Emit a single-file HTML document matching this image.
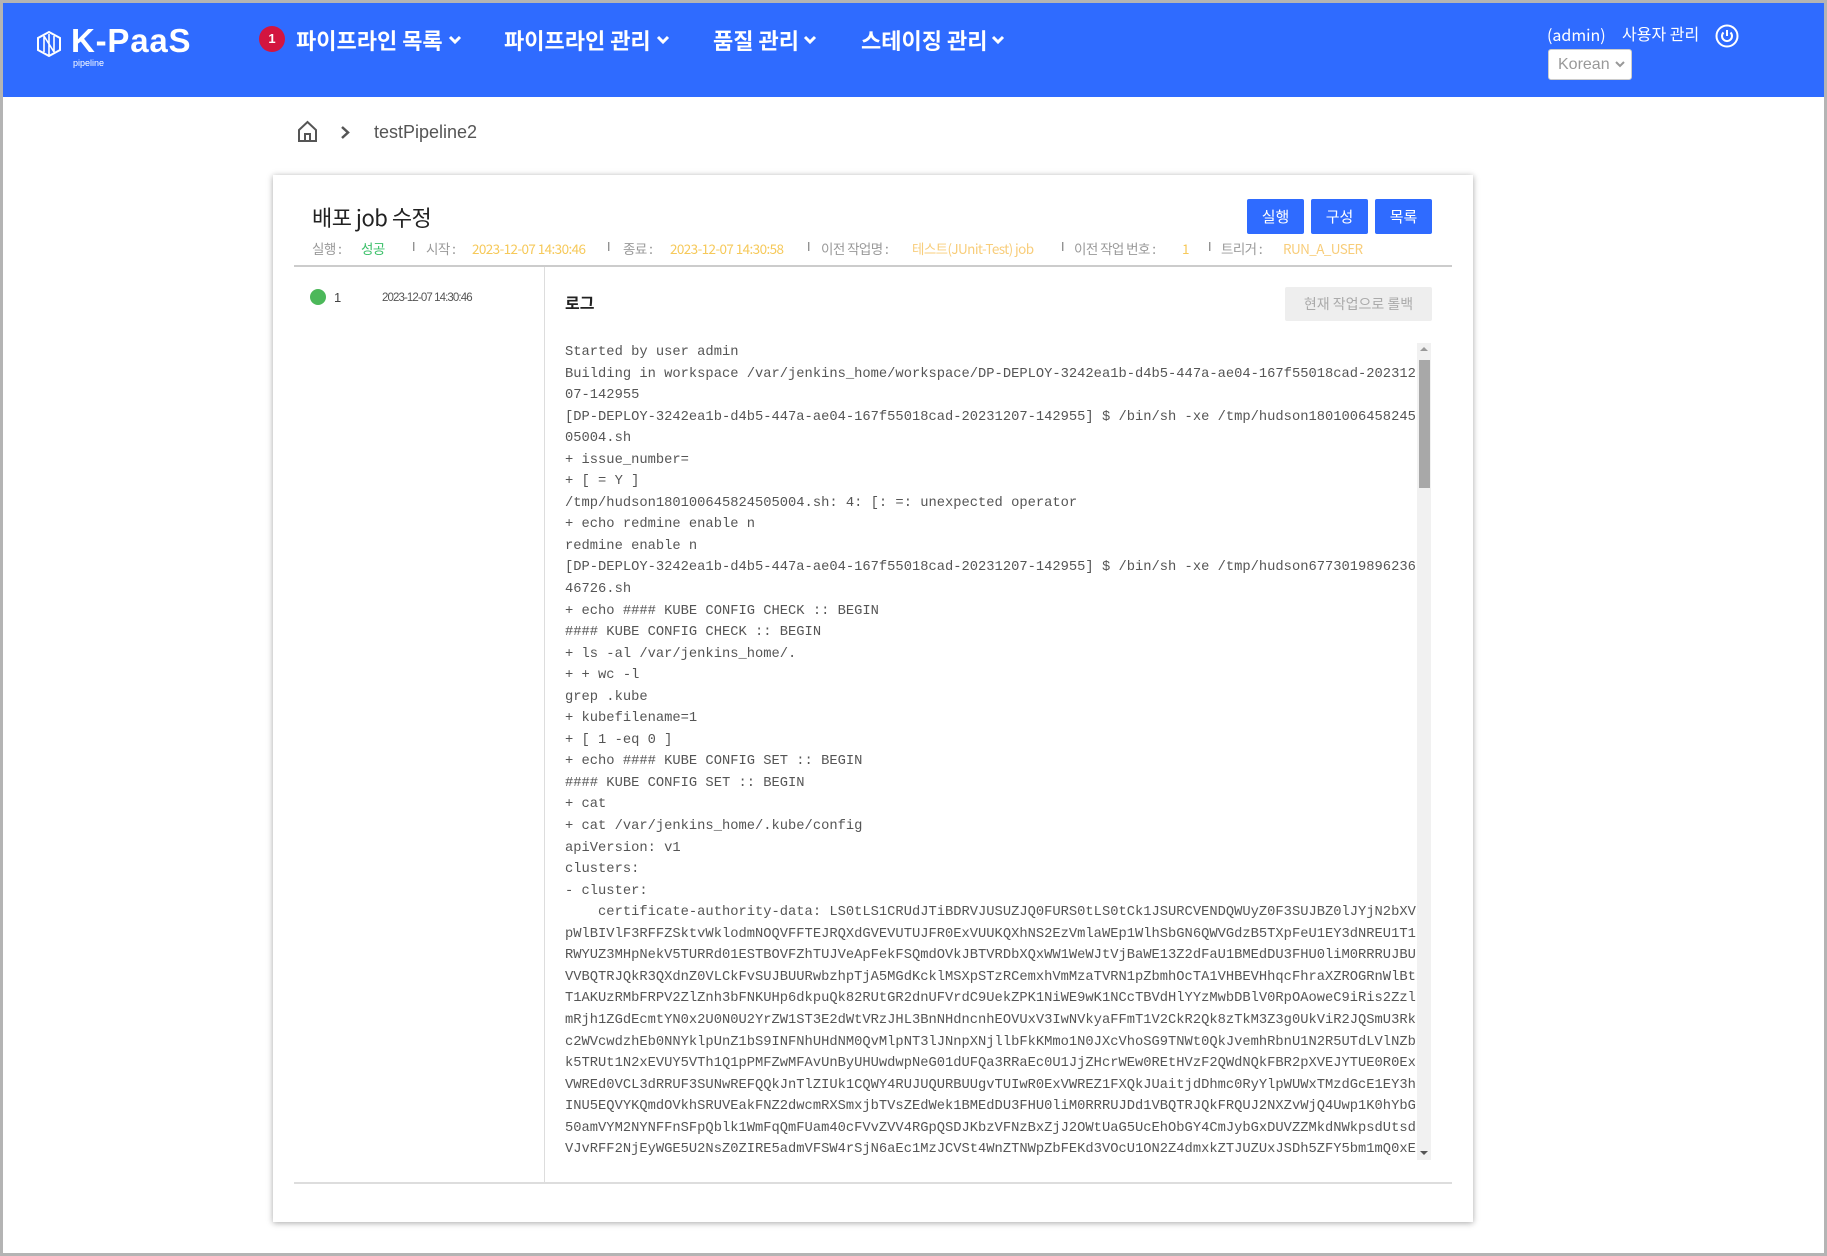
<!DOCTYPE html>
<html><head><meta charset="utf-8">
<style>
*{margin:0;padding:0;box-sizing:border-box}
html,body{width:1827px;height:1256px;overflow:hidden;background:#fff;font-family:"Liberation Sans","Noto Sans CJK KR",sans-serif}
.frame{position:absolute;left:0;top:0;width:1827px;height:1256px;border:3px solid #b4b4b4;border-bottom-width:3px}
.hdr{position:absolute;left:3px;top:3px;width:1821px;height:94px;background:#2f6bff}
.a{position:absolute;white-space:nowrap}
.menu{color:#fff;font-size:22px;font-weight:bold;top:24px;font-family:"Noto Sans CJK KR",sans-serif}
.meta{top:238px;font-size:13.5px;letter-spacing:-0.6px;font-family:"Noto Sans CJK KR","Liberation Sans",sans-serif}
.lab{color:#999}.val{color:#f6c95a}.sep{color:#777;font-size:12px}
.btn{position:absolute;top:199px;width:57px;height:35px;background:#2f6bff;color:#fff;font-size:15px;text-align:center;line-height:35px;border-radius:2px;font-family:"Noto Sans CJK KR",sans-serif}
pre{position:absolute;left:565px;top:342px;width:862px;height:818px;overflow:hidden;font-family:"Liberation Mono",monospace;font-size:13.77px;line-height:21.55px;color:#555}
</style></head><body>
<div class="frame"></div>
<div class="hdr"></div>
<svg class="a" style="left:36px;top:30px" width="26" height="28" viewBox="0 0 26 28"><path d="M13 2 L24 8 L24 20 L13 26 L2 20 L2 8 Z" fill="none" stroke="#fff" stroke-width="2"/><path d="M8 6 V22 M13 4 V26 M18 6 V22 M8 6 L18 22" stroke="#fff" stroke-width="1.6" fill="none"/></svg>
<div class="a" style="left:71px;top:22px;color:#fff;font-size:33px;font-weight:bold;letter-spacing:0.8px">K-PaaS</div>
<div class="a" style="left:73px;top:58px;color:#fff;font-size:9px">pipeline</div>
<div class="a" style="left:259px;top:26px;width:26px;height:26px;border-radius:50%;background:#d3153f;color:#fff;font-size:13px;font-weight:bold;text-align:center;line-height:26px">1</div>
<div class="a menu" style="left:296px">파이프라인 목록</div>
<div class="a menu" style="left:504px">파이프라인 관리</div>
<div class="a menu" style="left:713px">품질 관리</div>
<div class="a menu" style="left:861px">스테이징 관리</div>
<svg class="a" style="left:448px;top:34px" width="14" height="12"><path d="M2 3 L7 8 L12 3" stroke="#fff" stroke-width="3" fill="none"/></svg>
<svg class="a" style="left:656px;top:34px" width="14" height="12"><path d="M2 3 L7 8 L12 3" stroke="#fff" stroke-width="3" fill="none"/></svg>
<svg class="a" style="left:803px;top:34px" width="14" height="12"><path d="M2 3 L7 8 L12 3" stroke="#fff" stroke-width="3" fill="none"/></svg>
<svg class="a" style="left:991px;top:34px" width="14" height="12"><path d="M2 3 L7 8 L12 3" stroke="#fff" stroke-width="3" fill="none"/></svg>
<div class="a" style="left:1547px;top:22px;color:#fff;font-size:16px;font-family:'Noto Sans CJK KR',sans-serif">(admin)</div>
<div class="a" style="left:1622px;top:21px;color:#fff;font-size:16px;font-family:'Noto Sans CJK KR',sans-serif">사용자 관리</div>
<svg class="a" style="left:1714px;top:23px" width="26" height="26" viewBox="0 0 26 26"><circle cx="13" cy="13" r="10.5" fill="none" stroke="#fff" stroke-width="2"/><path d="M9.5 9.5 A5 5 0 1 0 16.5 9.5 M13 7 V13" fill="none" stroke="#fff" stroke-width="2"/></svg>
<div class="a" style="left:1548px;top:49px;width:84px;height:31px;background:#fff;border:1px solid #ccc;border-radius:3px;color:#999;font-size:16px;line-height:29px;padding-left:9px">Korean</div>
<svg class="a" style="left:1615px;top:60px" width="10" height="8"><path d="M1 2 L5 6 L9 2" stroke="#999" stroke-width="2" fill="none"/></svg>

<svg class="a" style="left:297px;top:120px" width="21" height="23" viewBox="0 0 21 23"><path d="M2 10 L10.5 2 L19 10 V21 H2 Z M8 21 V14 H13 V21" fill="none" stroke="#555" stroke-width="2"/></svg>
<svg class="a" style="left:340px;top:126px" width="10" height="13"><path d="M2 1 L8 6.5 L2 12" stroke="#555" stroke-width="2.5" fill="none"/></svg>
<div class="a" style="left:374px;top:122px;font-size:18px;color:#555">testPipeline2</div>

<div class="a" style="left:273px;top:175px;width:1200px;height:1047px;background:#fff;box-shadow:0 1px 6px rgba(0,0,0,0.35)"></div>
<div class="a" style="left:312px;top:201px;font-size:22px;color:#222;font-family:'Noto Sans CJK KR',sans-serif;letter-spacing:-0.5px">배포 job 수정</div>
<div class="btn" style="left:1247px">실행</div>
<div class="btn" style="left:1311px">구성</div>
<div class="btn" style="left:1375px">목록</div>
<div class="a meta lab" style="left:312px">실행 :</div><div class="a meta" style="left:361px;color:#3cc06a">성공</div>
<div class="a meta sep" style="left:412px">I</div><div class="a meta lab" style="left:426px">시작 :</div><div class="a meta val" style="left:472px">2023-12-07 14:30:46</div>
<div class="a meta sep" style="left:607px">I</div><div class="a meta lab" style="left:623px">종료 :</div><div class="a meta val" style="left:670px">2023-12-07 14:30:58</div>
<div class="a meta sep" style="left:807px">I</div><div class="a meta lab" style="left:821px">이전 작업명 :</div><div class="a meta val" style="left:912px;color:#f8cd7a">테스트(JUnit-Test) job</div>
<div class="a meta sep" style="left:1061px">I</div><div class="a meta lab" style="left:1074px">이전 작업 번호 :</div><div class="a meta val" style="left:1182px">1</div>
<div class="a meta sep" style="left:1208px">I</div><div class="a meta lab" style="left:1221px">트리거 :</div><div class="a meta val" style="left:1283px;color:#f8cd7a">RUN_A_USER</div>
<div class="a" style="left:294px;top:265px;width:1158px;height:2px;background:#ccc"></div>
<div class="a" style="left:544px;top:267px;width:1px;height:916px;background:#ddd"></div>
<div class="a" style="left:294px;top:1182px;width:1158px;height:2px;background:#ddd"></div>
<div class="a" style="left:310px;top:289px;width:16px;height:16px;border-radius:50%;background:#4cb85a"></div>
<div class="a" style="left:334px;top:290px;font-size:13px;color:#444">1</div>
<div class="a" style="left:382px;top:292px;font-size:11.5px;color:#555;letter-spacing:-0.9px">2023-12-07 14:30:46</div>
<div class="a" style="left:565px;top:290px;font-size:16px;color:#222;font-weight:bold;font-family:'Noto Sans CJK KR',sans-serif">로그</div>
<div class="a" style="left:1285px;top:287px;width:147px;height:34px;background:#eee;border-radius:2px;color:#aaa;font-size:14px;text-align:center;line-height:34px;font-family:'Noto Sans CJK KR',sans-serif">현재 작업으로 롤백</div>
<pre>Started by user admin
Building in workspace /var/jenkins_home/workspace/DP-DEPLOY-3242ea1b-d4b5-447a-ae04-167f55018cad-202312
07-142955
[DP-DEPLOY-3242ea1b-d4b5-447a-ae04-167f55018cad-20231207-142955] $ /bin/sh -xe /tmp/hudson1801006458245
05004.sh
+ issue_number=
+ [ = Y ]
/tmp/hudson180100645824505004.sh: 4: [: =: unexpected operator
+ echo redmine enable n
redmine enable n
[DP-DEPLOY-3242ea1b-d4b5-447a-ae04-167f55018cad-20231207-142955] $ /bin/sh -xe /tmp/hudson6773019896236
46726.sh
+ echo #### KUBE CONFIG CHECK :: BEGIN
#### KUBE CONFIG CHECK :: BEGIN
+ ls -al /var/jenkins_home/.
+ + wc -l
grep .kube
+ kubefilename=1
+ [ 1 -eq 0 ]
+ echo #### KUBE CONFIG SET :: BEGIN
#### KUBE CONFIG SET :: BEGIN
+ cat
+ cat /var/jenkins_home/.kube/config
apiVersion: v1
clusters:
- cluster:
    certificate-authority-data: LS0tLS1CRUdJTiBDRVJUSUZJQ0FURS0tLS0tCk1JSURCVENDQWUyZ0F3SUJBZ0lJYjN2bXV
pWlBIVlF3RFFZSktvWklodmNOQVFFTEJRQXdGVEVUTUJFR0ExVUUKQXhNS2EzVmlaWEp1WlhSbGN6QWVGdzB5TXpFeU1EY3dNREU1T1
RWYUZ3MHpNekV5TURRd01ESTBOVFZhTUJVeApFekFSQmdOVkJBTVRDbXQxWW1WeWJtVjBaWE13Z2dFaU1BMEdDU3FHU0liM0RRRUJBU
VVBQTRJQkR3QXdnZ0VLCkFvSUJBUURwbzhpTjA5MGdKcklMSXpSTzRCemxhVmMzaTVRN1pZbmhOcTA1VHBEVHhqcFhraXZROGRnWlBt
T1AKUzRMbFRPV2ZlZnh3bFNKUHp6dkpuQk82RUtGR2dnUFVrdC9UekZPK1NiWE9wK1NCcTBVdHlYYzMwbDBlV0RpOAoweC9iRis2Zzl
mRjh1ZGdEcmtYN0x2U0N0U2YrZW1ST3E2dWtVRzJHL3BnNHdncnhEOVUxV3IwNVkyaFFmT1V2CkR2Qk8zTkM3Z3g0UkViR2JQSmU3Rk
c2WVcwdzhEb0NNYklpUnZ1bS9INFNhUHdNM0QvMlpNT3lJNnpXNjllbFkKMmo1N0JXcVhoSG9TNWt0QkJvemhRbnU1N2R5UTdLVlNZb
k5TRUt1N2xEVUY5VTh1Q1pPMFZwMFAvUnByUHUwdwpNeG01dUFQa3RRaEc0U1JjZHcrWEw0REtHVzF2QWdNQkFBR2pXVEJYTUE0R0Ex
VWREd0VCL3dRRUF3SUNwREFQQkJnTlZIUk1CQWY4RUJUQURBUUgvTUIwR0ExVWREZ1FXQkJUaitjdDhmc0RyYlpWUWxTMzdGcE1EY3h
INU5EQVYKQmdOVkhSRUVEakFNZ2dwcmRXSmxjbTVsZEdWek1BMEdDU3FHU0liM0RRRUJDd1VBQTRJQkFRQUJ2NXZvWjQ4Uwp1K0hYbG
50amVYM2NYNFFnSFpQblk1WmFqQmFUam40cFVvZVV4RGpQSDJKbzVFNzBxZjJ2OWtUaG5UcEhObGY4CmJybGxDUVZZMkdNWkpsdUtsd
VJvRFF2NjEyWGE5U2NsZ0ZIRE5admVFSW4rSjN6aEc1MzJCVSt4WnZTNWpZbFEKd3VOcU1ON2Z4dmxkZTJUZUxJSDh5ZFY5bm1mQ0xE
aGJSQmJjQ0ZMWGZpcE5RbTJqWmF1YnVSN3pkZUJZMm5VK0FIVENQWmFLZk5lYXpZQXJRaHZ6MlBSZmZXTVhoRmdaQWdNYkJsMHpMd</pre>
<div class="a" style="left:1417px;top:343px;width:14px;height:817px;background:#f1f1f1"></div>
<div class="a" style="left:1419px;top:360px;width:11px;height:128px;background:#a8a8a8"></div>
<svg class="a" style="left:1419px;top:345px" width="10" height="8"><path d="M1 6 L5 2 L9 6 Z" fill="#999"/></svg>
<svg class="a" style="left:1419px;top:1149px" width="10" height="8"><path d="M1 2 L5 6 L9 2 Z" fill="#555"/></svg>
</body></html>
